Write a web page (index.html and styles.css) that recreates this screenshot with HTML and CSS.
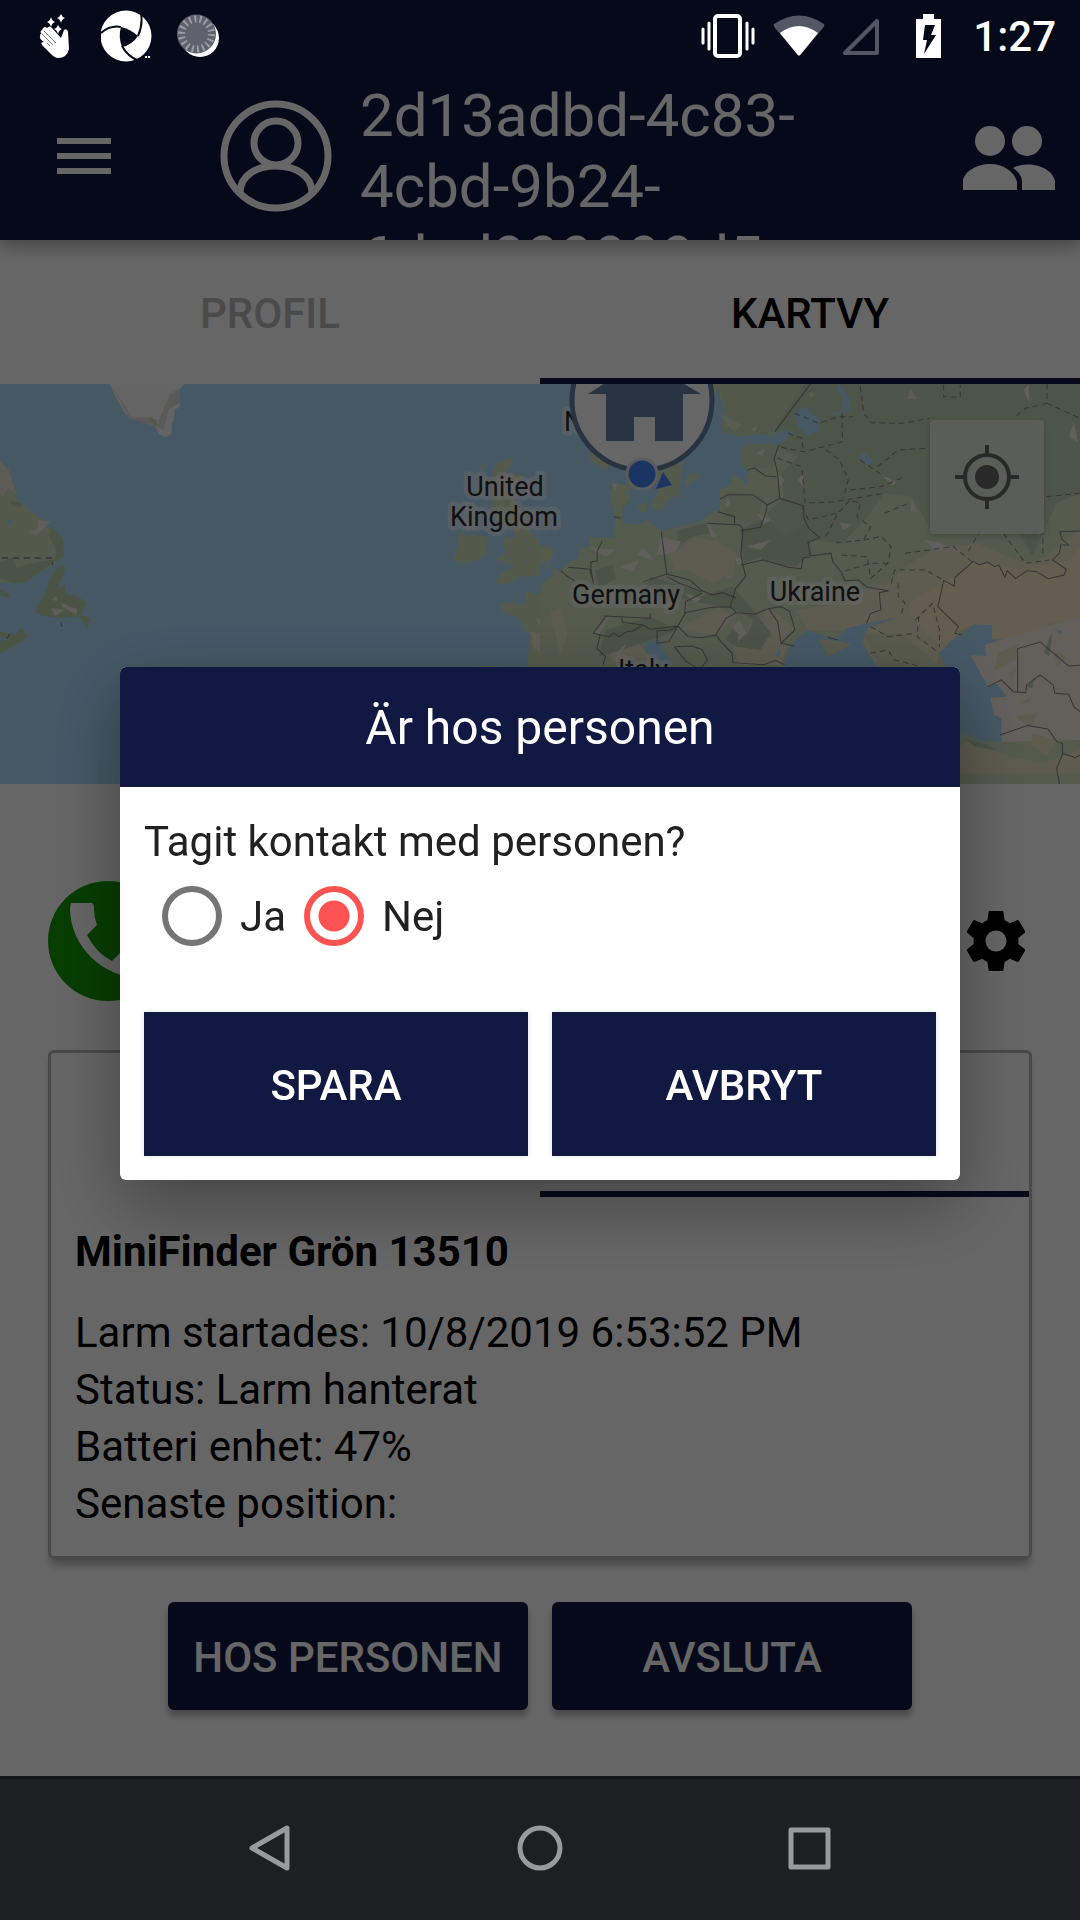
FILE: index.html
```html
<!DOCTYPE html>
<html lang="sv">
<head>
<meta charset="utf-8">
<meta name="viewport" content="width=device-width, initial-scale=1">
<title>Kartvy</title>
<link rel="stylesheet" href="styles.css">
</head>
<body>
<div class="screen">
  <div class="status-bar">
    <div class="status-group status-left">
      <svg width="38" height="44" viewBox="0 0 38 44" fill="#fff">
        <path d="M3 16Q5 11 8 14Q11 11 13 14L22 24L25 16Q28 14 29 18L30 35Q28 44 19 44Q16 44 12 40L3 31Q1 28 5 28Q0 25 1 22Q1 19 3 20Q0 18 3 16Z"/>
        <path d="M3 20L14 31M5 17L17 29M8 29L11 32" stroke="#777b8a" fill="none"/>
        <path d="M12 3Q13 7 16 8Q13 9 12 13Q11 9 8 8Q11 7 12 3ZM22 0Q23 3 26 4Q23 5 22 9Q21 5 18 4Q21 3 22 0ZM19 11Q20 14 23 15Q20 16 19 20Q18 16 15 15Q18 14 19 11Z"/>
      </svg>
      <svg width="52" height="52" viewBox="0 0 52 52">
        <circle cx="25" cy="26" r="25.500" fill="#fff"/>
        <path d="M20 17Q29 19 37 26Q31 35 21 37Q17 27 20 17Z" fill="#06091a"/>
        <path d="M0 23Q9 15 20 17M40 3Q42 15 37 26M21 36Q26 46 38 51" fill="none" stroke="#06091a" stroke-width="2"/>
        <path d="M44 46h8v6h-10z" fill="#06091a"/><path d="M44 47h2m1 0h2" stroke="#fff" stroke-width="2"/>
      </svg>
      <svg width="44" height="44" viewBox="0 0 44 44">
        <circle cx="23" cy="24" r="19" fill="#fff"/>
        <circle cx="19.500" cy="20" r="19.500" fill="#5f616d"/>
        <circle cx="19.500" cy="20" r="15" fill="none" stroke="#9a9ba3" stroke-width="7" stroke-dasharray="2 3.236"/>
      </svg>
    </div>
    <div class="status-group status-right">
      <svg width="54" height="44" viewBox="0 0 54 44" fill="none" stroke="#fff" stroke-linecap="round">
        <rect x="14" y="2" width="25" height="40" rx="3" stroke-width="4"/>
        <path d="M2 15v14M8 9v26M46 9v26M52 15v14" stroke-width="3"/>
      </svg>
      <svg width="52" height="42" viewBox="0 0 52 42">
        <path d="M1 9Q26 -8 51 9Q52 11 50 13L28 39Q26 42 24 39L2 13Q0 11 1 9Z" fill="#545663"/>
        <path d="M7 18Q26 4 45 18L28 39Q26 42 24 39Z" fill="#fff"/>
      </svg>
      <svg width="37" height="37" viewBox="0 0 37 37" fill="none" stroke="#545663" stroke-width="4" stroke-linejoin="round">
        <path d="M2 35H34V3Z"/>
      </svg>
      <svg class="battery" width="25" height="44" viewBox="0 0 25 44">
        <path d="M7 0h11v5h7v39H0V5h7z" fill="#fff"/>
        <path d="M9 11h10l-4 10h5L8 40l3-14H7z" fill="#06091a"/>
      </svg>
      <time class="clock">1:27</time>
    </div>
  </div>

  <header class="app-bar">
    <button class="icon-button menu-button" aria-label="Meny">
      <svg width="54" height="36" viewBox="0 0 54 36" fill="#fff"><path d="M0 0h54v6H0zM0 15h54v6H0zM0 30h54v6H0z"/></svg>
    </button>
    <svg class="avatar" width="112" height="112" viewBox="0 0 112 112" fill="none" stroke="#fff" stroke-width="7">
      <circle cx="56" cy="56" r="52"/>
      <circle cx="56" cy="43" r="22"/>
      <path d="M20 93C20 75 37 66 56 66S92 75 92 93"/>
    </svg>
    <h1 class="app-title">2d13adbd-4c83-4cbd-9b24-6dcd999999d5</h1>
    <button class="icon-button people-button" aria-label="Personer">
      <svg width="94" height="66" viewBox="0 0 94 66" fill="#fff">
        <circle cx="28" cy="15" r="15"/><circle cx="65" cy="15" r="15"/>
        <path d="M1 64V54C3 45 15 38 28 38S52 45 55 56V64Z"/>
        <path d="M51 42C65 34 90 40 93 55V64H60V56Q60 48 51 42Z"/>
      </svg>
    </button>
  </header>

  <div class="tabs" role="tablist">
    <button class="tab" role="tab" aria-selected="false">PROFIL</button>
    <button class="tab tab-active" role="tab" aria-selected="true">KARTVY</button>
  </div>

  <main>
    <section class="map" aria-label="Karta">
      <svg class="map-canvas" viewBox="0 0 1080 400" preserveAspectRatio="xMidYMid slice">
        <rect width="1080" height="400" fill="#addcfb"/>
        <!-- Greenland, Canada and the British Isles -->
        <g transform="translate(0 -14) scale(.3444 .3333)">
          <path d="M318 42L338 85L360 125L380 148L405 150L445 168L462 193L482 201L499 190L498 160L505 150L507 120L522 110L520 60L535 42Z" fill="#fafafa"/>
          <path d="M318 42L380 148L445 168L462 193L450 160L440 142L385 143L325 50ZM520 55L485 80L500 60L470 130L455 168L475 180L490 120L520 100Z" fill="#e2e1dd"/>
          <path d="M435 142l20 8v18l-14-10z" fill="#cbd5b8"/>
          <path d="M0 270L25 295L50 372L42 380L108 442L146 456L132 468L182 504L187 558L150 590L110 610L75 638H0Z" fill="#cfdebc"/>
          <path d="M0 275L25 300L45 370L25 355L10 380L0 372Z" fill="#e8e5d8"/>
          <path d="M35 390l30 10-5 15-30-10zM150 470l32 35 5 53-30 20 5-40-20-40zM0 575l35-10 15 30 20-10 100-20-60 45-35 28H35L0 625z" fill="#bcd0b0"/>
          <path d="M110 450l36 6-40 40-22-8 28-16z" fill="#f0ece4"/>
          <path d="M20 447l20 8-10 8-10-4z" fill="#addcfb"/>
          <path d="M5 564H152v22" fill="none" stroke="#857f84" stroke-width="4" stroke-dasharray="18 14"/>
          <path d="M188 586L165 592L146 622L133 665L100 730L120 736L170 744L213 742L228 736L254 776L262 745L235 735L252 700L225 678L190 670L188 646L166 655L188 604Z" fill="#bcd0ad"/>
          <path d="M148 690l15-12 5 14zM178 698l46 20-2 16-40-24zM148 715l40 4-28 20z" fill="#ece8df"/>
          <path d="M0 657l33 18-14 8-19-8zM0 785l45 10 15-20 24 24-30 20-54 32v-38l30-5-30-8z" fill="#bcd0ad"/>
          <path d="M178 758v8l4 4M28 792l-8 14" fill="none" stroke="#8a8385" stroke-width="3"/>
          <path d="M1392 298L1412 275L1404 304ZM1430 305L1445 278L1478 266L1493 272L1478 295L1465 312L1520 315L1510 345L1490 370L1500 400L1530 430L1535 480L1568 520V618L1510 620L1480 640H1437L1455 608L1497 590L1440 570L1468 548L1460 505L1495 510L1493 480L1440 450L1425 410Z" fill="#d3dfbd"/>
          <path d="M1465 505H1568V616L1500 620L1470 640H1437L1470 600L1500 590L1440 570L1468 548ZM1330 490L1415 500L1411 558L1350 583L1315 570L1332 520Z" fill="#d0e2bc"/>
          <path d="M1524 664L1568 676V891H1530L1540 790L1522 780L1506 744L1460 725L1451 703L1495 695L1502 704L1530 700ZM1385 888h60v10h-60z" fill="#d0e2bc"/>
          <path d="M1540 785l28 5v60l-20-20zM1560 750l8-8v30z" fill="#f0edcd"/>
        </g>
        <!-- Continental Europe and western Asia -->
        <g transform="translate(540 -14) scale(.3444 .3333)">
          <path d="M524 42H1568V1242H1220V891H0V672L5 640L40 616L20 570L0 590V530L30 530L42 548L20 590L60 602L85 575L110 565L118 538L142 528L142 503L216 503L218 445L203 380L210 342L264 345L258 390L240 415V460L280 465L312 450L350 482L457 458L505 425L522 420V360L555 345L560 310L602 345L605 300L583 275L585 240L610 220L650 232L693 225L737 187L692 178L680 200L620 183L585 200L535 190L526 170L538 120L522 80Z" fill="#d1e0be"/>
          <path d="M417 250L482 130L524 42H450L400 300ZM340 300L417 250L405 380L380 385L350 420L320 410L345 360ZM420 330l20-20h28l-24 25-20 15zM280 410l22-15 10 12-10 25zM140 250l42-2 20 40-10 10-45-25z" fill="#cfdebc"/>
          <path d="M524 42H1568V370L1500 400L1430 560L1390 490H1140L1080 380L1000 370L950 440L880 520L790 510L720 590L640 570L660 530L700 490L660 430L710 380L700 310L750 260L690 230L740 185L680 180L650 195L540 190L530 160L545 120Z" fill="#c1d4b4"/>
          <path d="M524 42H770L680 180L585 200L535 190L526 170L538 120ZM590 225L680 220V290L605 300L583 275ZM540 360L650 380L630 460L530 440Z" fill="#cbdcb9"/>
          <path d="M1568 480L1470 560L1420 575L1380 570L1270 520L1140 540L1060 590L1010 640L960 650L890 700L740 720L780 780L940 780V891L1030 850L1150 891L1160 850L1220 780L1290 750L1350 820L1568 860Z" fill="#ebe7ca"/>
          <path d="M1568 530L1540 570L1410 600L1260 580L1170 640L1070 700L1080 740L1180 850L1220 780L1260 765H1312V806H1420L1480 760L1568 740Z" fill="#fbebc8"/>
          <path d="M380 560L450 500L520 515L570 550L560 620L500 640L440 605L390 600ZM430 760L520 710L560 740L515 795L410 780ZM200 830L260 800L330 860L210 880ZM560 820L690 800L720 830L700 885H575ZM660 710L740 775L690 820L640 760ZM30 730l30-20 20 80-20 70z" fill="#ebe7ca"/>
          <path d="M580 480L660 440L710 500L770 460L790 550L740 590L640 560L590 580ZM430 690L560 650L620 720L670 790L640 840L570 830L540 810L560 770L600 800L620 750L570 720ZM190 780L320 740L400 780L300 820L170 860ZM320 620L470 665L440 690L300 670ZM160 600l50-15 10 40-50 30zM400 480l80-20 20 30-60 10-40 30zM1410 500l40-30-20 90z" fill="#bccdb0"/>
          <path d="M350 500l60 15-20 35-50 5zM300 530l30 40-48-15zM140 530l80 10-30 20zM230 590l60-20-20 35zM480 440l35 65-18-5zM600 530l70-20-30 30zM630 430l40 20-20 12zM690 310l20 20-18 25zM750 330l14-20v40zM1080 390l15 38-20-4zM1118 510l35 40 30-20-20-10zM990 315l45 20-10 10zM1405 60l15-18v54zM1550 155l12 60-26-14zM630 250l22-14-6 20zM580 750l18 40-25 28 4-25-20-20zM150 790l50-45-30 50zM420 670l50 15-20 14zM210 340l15 3-8 20zM565 560l30 15-20 10zM545 380l10 20-18 14zM220 850l30-30-15 40zM615 175l17-6-12 18zM870 455l35 10-25 15z" fill="#f3eee6"/>
          <path d="M1075 55l20 32h-28zM525 130l60 35-20 20-24-20zM780 65l20 5-15 15z" fill="#dfe5c4"/>
          <path d="M740 135L765 108L814 150L812 180L780 200L750 170ZM870 42L902 90L898 125L877 128L882 90L860 50ZM922 262l20-16 24 28-12 16zM846 135l30-12 4 10zM310 815L345 810L388 888H335L303 840Z" fill="#addcfb"/>
          <path d="M708 891L712 860L738 810L780 780L830 800L865 805L890 775L950 760L1040 742L950 775L935 820L980 891ZM682 862l12-27 4 18z" fill="#addcfb"/>
          <path d="M808 808L866 812L905 824L838 858ZM940 790h110l110 100H985Z" fill="#dde1c1"/>
          <path d="M1160 850L1195 810L1226 795L1262 763L1312 765L1313 806L1355 828L1335 835L1292 824L1295 858L1251 856L1279 900L1300 950L1325 940L1356 980L1308 983L1320 1015L1318 1035L1340 1045V1116H1290L1220 1088V891H1180Z" fill="#addcfb"/>
          <path d="M1251 856L1295 858L1292 824L1568 740V1110L1340 1116V1045L1318 1035L1308 983L1356 980L1325 940L1300 950Z" fill="#f7f0e7"/>
          <path d="M1330 850l60-30-10 50-60 30zM1360 910l20-15-10 45zM1490 840l40 20-30 30zM1380 1040l65-10-20 45zM1430 1090l70 20-30 50-45-35zM1250 1110l110 50 100 20 108-40v70H1220v-80zM1390 1000l40-20-10 20z" fill="#ebe5c5"/>
          <path d="M1230 1105l70 20 25 16-60-10zM1480 800l8-12-10 70-14-10zM1410 950l25-20-5 25z" fill="#b9cfb0"/>
          <path d="M1492 775l25 10-5 8zM520 635l20-20 2-15-2 24z" fill="#addcfb"/>
          <g fill="none" stroke="#888184" stroke-width="3">
            <path d="M785 42L682 185M693 225L680 265L690 310L696 385L766 408V444L780 475L812 503L778 517L785 558L845 550L850 575L875 607L885 632L925 630L950 652L1012 662L985 668L990 720L960 730L948 760"/>
            <path d="M522 388L545 374H618L660 405L696 385M603 300L622 294L655 318L685 320M660 405L655 430L640 472L583 482M485 460L580 465L590 480L583 555L597 620L568 655L552 710M517 425L565 440V463M583 585L648 570L700 585L720 592L758 596L765 563L785 560M352 485L368 612L300 635M368 612L435 630L470 662L500 675L530 668L568 684M368 620L405 640L470 665M552 710L500 712L420 728L423 695L470 670M552 710L570 728L622 733L664 716L700 710L725 725L740 780L700 820L738 828M664 716L690 755L700 820M570 728L540 745L510 795L470 803L430 800L400 768L423 728M510 795L530 820L558 850L560 878L650 884L683 872L710 884M400 768L380 780L340 782V820L375 815L400 768M390 830L440 828L470 838L486 870L470 891M390 830L425 875L450 890M60 602L80 620L100 632M82 592L145 598L150 620M180 514L166 545V573L148 575V600L155 640M215 440L235 445M235 738L240 757L300 765L320 778L400 768M185 738L230 740L320 745V730M190 740L155 790L175 795L165 835L190 860L183 885M155 790L200 800L215 790L230 800L250 785L270 783L300 765"/>
            <path d="M1226 795L1205 790L1215 770L1155 710L1172 632L1203 648L1205 622L1258 574L1275 585L1300 576L1320 590L1332 585L1350 622L1356 602L1381 625L1415 602L1442 605L1475 626L1522 615L1528 598L1488 570L1508 550L1512 525L1535 525L1515 508L1510 485L1568 483M1387 965V836L1452 816L1535 888L1568 886M1300 950L1340 930L1375 966L1410 968L1413 945L1452 915L1490 945L1495 970L1535 973L1550 1010L1568 1025M1336 1095L1415 1067L1475 1077L1500 1115L1517 1120V1155L1500 1195L1508 1242M1517 1150L1555 1163L1568 1155M835 802L866 810"/>
            <path stroke-dasharray="16 12" d="M930 50L940 130L962 158L1050 160L1132 145M1172 45V80L1220 82V45M1472 42V100L1410 115L1380 140M1472 100L1568 145M740 130L810 160L865 140L910 140M877 130L878 215L825 230L765 245L690 230M690 265L760 290L770 400L860 395L940 380L1000 370M830 240L870 270L895 330L880 385M830 500L865 430L900 390L930 400L920 440L960 470L940 510L850 520M940 510L990 500L1020 530L1010 580L960 625L950 560L870 555M1010 580L960 580L880 605M1020 640L1030 600L1120 600L1170 630M1040 640V680L1060 700L1045 740M960 770L1010 800L1090 790M960 850L1010 840L1030 870L1110 891M1090 750L1140 700L1160 780V830M1100 740L1095 800L1160 850M980 290L1040 240L1130 235M1060 550L1200 530L1260 580M1280 480L1240 550M1345 490L1410 580L1480 570M1460 550V490M1470 380L1568 370M860 430L780 450L760 410M900 360L990 350L1060 320M1000 430L1070 400M720 190L760 205L765 245M930 270L1000 320"/>
          </g>
        </g>
        <g class="map-label">
          <text x="564" y="47">N</text>
          <text x="505" y="112" text-anchor="middle">United</text>
          <text x="504" y="142" text-anchor="middle">Kingdom</text>
          <text x="626" y="220" text-anchor="middle">Germany</text>
          <text x="815" y="217" text-anchor="middle">Ukraine</text>
          <text x="643" y="295" text-anchor="middle">Italy</text>
        </g>
        <circle cx="642" cy="16" r="70" fill="#fff" stroke="#647fa6" stroke-width="5"/>
        <path d="M606 57V10H588L642 -25L701 10H683V57H655V33H634V57Z" fill="#6482a5"/>
        <path d="M663 88L672 101L656 105Z" fill="#4285f4"/>
        <circle cx="642" cy="90" r="15" fill="#4285f4" stroke="#e4e4e4" stroke-width="3"/>
      </svg>
      <button class="locate-button" aria-label="Min position">
        <svg width="64" height="64" viewBox="0 0 64 64">
          <path d="M32 0v10M32 54v10M0 32h10M54 32h10" stroke="#666" stroke-width="4"/>
          <circle cx="32" cy="32" r="22" fill="none" stroke="#666" stroke-width="4"/>
          <circle cx="32" cy="32" r="12" fill="#666"/>
        </svg>
      </button>
    </section>

    <div class="actions">
      <button class="icon-button" aria-label="Ring">
        <svg width="120" height="120" viewBox="0 0 120 120">
          <circle cx="60" cy="60" r="60" fill="#129a00"/>
          <path d="M23 22H44Q46 23 46 28Q46 36 49 44L39 54Q48 72 64 80L74 70Q83 74 93 74Q97 75 97 79V93Q97 97 92 97C55 96 22 66 22 27Z" fill="#fff"/>
        </svg>
      </button>
      <button class="icon-button" aria-label="Inställningar">
        <svg width="72" height="72" viewBox="0 0 24 24"><path d="M19.430 12.980c.04-.32.07-.64.07-.98s-.03-.66-.07-.98l2.110-1.650c.19-.15.24-.42.12-.64l-2-3.460c-.12-.22-.39-.3-.61-.22l-2.490 1c-.52-.4-1.080-.73-1.690-.98l-.38-2.650C14.460 2.180 14.250 2 14 2h-4c-.25 0-.46.18-.49.42l-.38 2.650c-.61.25-1.170.59-1.690.98l-2.490-1c-.23-.09-.49 0-.61.22l-2 3.460c-.13.22-.07.49.12.64l2.110 1.650c-.04.32-.07.65-.07.98s.03.66.07.98l-2.110 1.650c-.19.15-.24.42-.12.64l2 3.460c.12.22.39.3.61.22l2.490-1c.52.4 1.080.73 1.690.98l.38 2.650c.03.24.24.42.49.42h4c.25 0 .46-.18.49-.42l.38-2.650c.61-.25 1.170-.59 1.690-.98l2.490 1c.23.09.49 0 .61-.22l2-3.460c.12-.22.07-.49-.12-.64l-2.110-1.650zM12 15.500c-1.930 0-3.500-1.570-3.500-3.500s1.570-3.500 3.500-3.500 3.500 1.570 3.500 3.500-1.570 3.500-3.500 3.500z"/></svg>
      </button>
    </div>

    <section class="alarm-card">
      <div class="card-tabs"><span class="card-tab"></span><span class="card-tab card-tab-active"></span></div>
      <div class="card-body">
        <h2 class="device-name">MiniFinder Grön 13510</h2>
        <p>Larm startades: 10/8/2019 6:53:52 PM</p>
        <p>Status: Larm hanterat</p>
        <p>Batteri enhet: 47%</p>
        <p>Senaste position:</p>
      </div>
    </section>

    <div class="page-buttons">
      <button class="raised-button">HOS PERSONEN</button>
      <button class="raised-button">AVSLUTA</button>
    </div>
  </main>

  <nav class="system-nav">
    <button class="icon-button" aria-label="Tillbaka"><svg width="48" height="48" viewBox="0 0 48 48"><path d="M41 4V44L6 24Z"/></svg></button>
    <button class="icon-button" aria-label="Hem"><svg width="48" height="48" viewBox="0 0 48 48"><circle cx="24" cy="24" r="20"/></svg></button>
    <button class="icon-button" aria-label="Översikt"><svg width="48" height="48" viewBox="0 0 48 48"><rect x="5" y="6" width="37" height="37"/></svg></button>
  </nav>
</div>

<div class="scrim">
  <form class="dialog" role="dialog" aria-labelledby="dialog-title">
    <h2 class="dialog-title" id="dialog-title">Är hos personen</h2>
    <div class="dialog-body">
      <p id="question">Tagit kontakt med personen?</p>
      <div class="choices" role="radiogroup" aria-labelledby="question">
        <label class="choice"><input type="radio" name="contact" value="ja">Ja</label>
        <label class="choice"><input type="radio" name="contact" value="nej" checked>Nej</label>
      </div>
      <div class="dialog-buttons">
        <button class="dialog-button" type="button">SPARA</button>
        <button class="dialog-button" type="button">AVBRYT</button>
      </div>
    </div>
  </form>
</div>
</body>
</html>
```
FILE: styles.css
```css
* {
  box-sizing: border-box;
}

body {
  margin: 0;
  font-family: Roboto, "Liberation Sans", sans-serif;
  font-size: 42px;
  line-height: 57px;
  color: #000;
  background: #fff;
}

h1, h2, p {
  margin: 0;
  font-weight: 400;
}

button {
  padding: 0;
  border: 0;
  font: inherit;
  font-weight: 500;
  background: none;
}

svg {
  display: block;
  flex: none;
}

.screen {
  display: flex;
  flex-direction: column;
  min-height: 100vh;
}

main {
  flex: 1;
}

.icon-button {
  display: flex;
  flex: none;
  align-items: center;
  justify-content: center;
}

/* System status bar, drawn above the scrim */
.status-bar {
  position: relative;
  z-index: 3;
  display: flex;
  align-items: center;
  justify-content: space-between;
  height: 72px;
  padding: 0 24px 0 39px;
  color: #fff;
  background: #06091a;
}

.status-group {
  display: flex;
  align-items: center;
}

.status-left {
  gap: 24px;
}

.status-right {
  gap: 18px;
}

.battery {
  margin-left: 18px;
}

.clock {
  margin-left: 14px;
  font-weight: 500;
}

/* App bar */
.app-bar {
  position: relative;
  z-index: 1;
  display: flex;
  align-items: center;
  height: 168px;
  padding: 0 24px 0 48px;
  color: #fff;
  background: #111842;
  box-shadow: 0 6px 18px rgba(0, 0, 0, .35);
}

.menu-button {
  width: 72px;
  height: 72px;
}

.people-button {
  padding-top: 6px;
}

.avatar {
  margin-left: 100px;
}

.app-title {
  flex: 1;
  align-self: stretch;
  margin: 8px 120px 0 28px;
  overflow: hidden;
  font-size: 60px;
  line-height: 71px;
}

/* Tabs */
.tabs {
  display: grid;
  grid-template-columns: 1fr 1fr;
}

.tab {
  height: 144px;
  padding-top: 2px;
  color: #b8b8b8;
}

.tab-active {
  color: #000;
  box-shadow: inset 0 -6px #111842;
}

/* Map */
.map {
  position: relative;
  height: 400px;
}

.map-canvas {
  width: 100%;
  height: 100%;
}

.map-label {
  font-size: 27px;
  fill: #2b2b2b;
  stroke: #fff;
  stroke-opacity: .5;
  stroke-width: 9px;
  stroke-linejoin: round;
  paint-order: stroke;
}

.locate-button {
  position: absolute;
  top: 36px;
  right: 36px;
  display: grid;
  place-items: center;
  width: 114px;
  height: 114px;
  border-radius: 4px;
  background: rgba(240, 240, 240, .72);
  box-shadow: 0 2px 6px rgba(0, 0, 0, .2);
}

/* Call and settings row */
.actions {
  display: flex;
  align-items: center;
  justify-content: space-between;
  padding: 97px 48px 49px;
}

/* Alarm card */
.alarm-card {
  margin: 0 48px;
  border: 3px solid #b8b8b8;
  border-radius: 6px;
  box-shadow: 0 9px 9px -3px rgba(0, 0, 0, .3);
}

.card-tabs {
  display: grid;
  grid-template-columns: 1fr 1fr;
  height: 144px;
}

.card-tab-active {
  border-bottom: 6px solid #111842;
}

.card-body {
  padding: 26px 24px 24px;
}

.device-name {
  margin-bottom: 24px;
  font-size: 42px;
  font-weight: 700;
}

.page-buttons {
  display: grid;
  grid-template-columns: 1fr 1fr;
  gap: 24px;
  padding: 43px 168px 66px;
}

.raised-button {
  height: 108px;
  padding-top: 2px;
  border-radius: 6px;
  color: #fff;
  background: #111842;
  box-shadow: 0 6px 6px rgba(0, 0, 0, .3);
}

/* System navigation, drawn above the scrim */
.system-nav {
  position: relative;
  z-index: 3;
  display: grid;
  grid-template-columns: repeat(3, 1fr);
  place-items: center;
  height: 144px;
  padding: 0 12.5% 3px;
  border-top: 3px solid #141718;
  background: #1c2021;
}

.system-nav svg {
  fill: none;
  stroke: #999a9b;
  stroke-width: 5;
  stroke-linejoin: round;
}

/* Dialog */
.scrim {
  position: fixed;
  inset: 0;
  z-index: 2;
  display: flex;
  align-items: center;
  padding: 71px 120px 144px;
  background: rgba(0, 0, 0, .6);
}

.dialog {
  flex: 1;
  overflow: hidden;
  border-radius: 6px;
  color: #212121;
  background: #fff;
  box-shadow: 0 24px 72px rgba(0, 0, 0, .35);
}

.dialog-title {
  padding-top: 2px;
  font-size: 48px;
  line-height: 118px;
  text-align: center;
  color: #fff;
  background: #111842;
}

.dialog-body {
  padding: 26px 24px 24px;
}

.choices {
  display: flex;
  gap: 18px;
  padding: 16px 18px 66px;
}

.choice {
  display: flex;
  align-items: center;
  gap: 18px;
}

.choice input {
  appearance: none;
  width: 60px;
  height: 60px;
  margin: 0;
  border: 6px solid #757575;
  border-radius: 50%;
}

.choice input:checked {
  border-color: #ff5252;
  background: radial-gradient(circle, #ff5252 15px, transparent 16px);
}

.dialog-buttons {
  display: grid;
  grid-template-columns: 1fr 1fr;
  gap: 24px;
}

.dialog-button {
  height: 144px;
  padding-top: 2px;
  color: #fff;
  background: #111842;
  box-shadow: 0 0 6px rgba(0, 0, 0, .1);
}
```
